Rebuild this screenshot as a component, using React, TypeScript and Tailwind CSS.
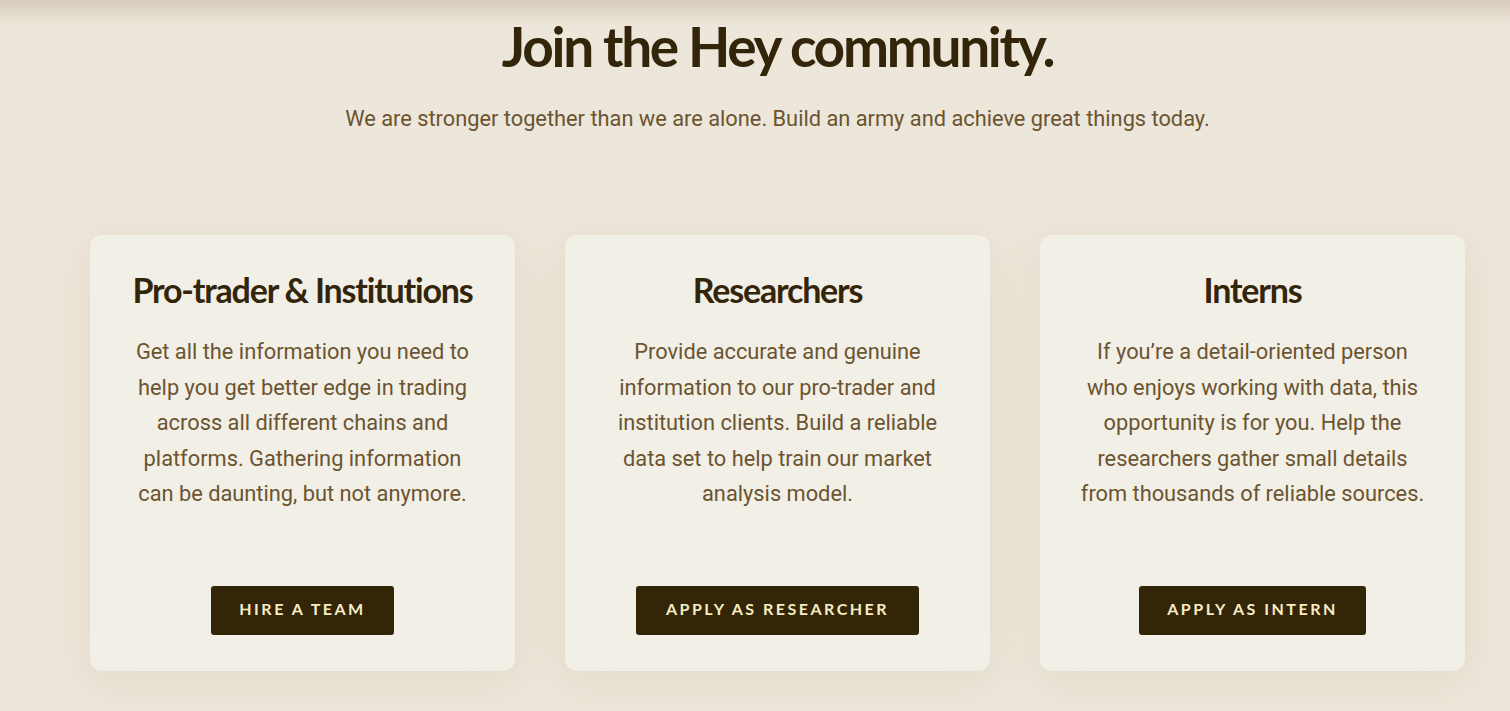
const roles = [
  {
    title: 'Pro-trader & Institutions',
    body: 'Get all the information you need to help you get better edge in trading across all different chains and platforms. Gathering information can be daunting, but not anymore.',
    cta: 'Hire a team',
    btnWidth: 'w-[183px]',
  },
  {
    title: 'Researchers',
    body: 'Provide accurate and genuine information to our pro-trader and institution clients. Build a reliable data set to help train our market analysis model.',
    cta: 'Apply as researcher',
    btnWidth: 'w-[283px]',
  },
  {
    title: 'Interns',
    body: 'If you\u2019re a detail-oriented person who enjoys working with data, this opportunity is for you. Help the researchers gather small details from thousands of reliable sources.',
    cta: 'Apply as intern',
    btnWidth: 'w-[227px]',
  },
];

function RoleCard({ title, body, cta, btnWidth }: (typeof roles)[number]) {
  return (
    <div className="flex h-[436px] w-[425px] flex-col items-center rounded-xl bg-[#f2efe6] px-[37px] pt-[31px] pb-[36px] text-center shadow-[0_10px_44px_rgba(160,140,100,0.14)]">
      <h3 className="font-['Lato',sans-serif] text-[34px] leading-[48px] font-bold tracking-[-1.2px] whitespace-nowrap text-[#33250a]">
        {title}
      </h3>
      <p className="mt-[20px] font-['Roboto',sans-serif] text-[21.8px] leading-[35.5px] font-normal text-[#6b5430]">
        {body}
      </p>
      <button
        type="button"
        className={`mt-auto h-[49px] ${btnWidth} rounded-[3px] bg-[#332508] pb-[3px] font-['Lato',sans-serif] text-[16px] font-bold tracking-[2.5px] text-[#f8ecc2] uppercase`}
      >
        {cta}
      </button>
    </div>
  );
}

export default function App() {
  return (
    <div className="relative min-h-[711px] overflow-hidden bg-[#ede6da]">
      <div className="pointer-events-none absolute inset-x-0 top-0 h-[26px] bg-gradient-to-b from-[#d6ccbb] to-transparent" />
      <div className="relative ml-[90px] flex w-[1375px] flex-col items-center pt-[14px]">
        <h1 className="font-['Lato',sans-serif] text-[55px] leading-[64px] font-bold tracking-[-2.3px] text-[#33250a]">
          Join the Hey community.
        </h1>
        <p className="mt-[25px] font-['Roboto',sans-serif] text-[21.8px] leading-[32px] font-normal text-[#6b5430]">
          We are stronger together than we are alone. Build an army and achieve great things today.
        </p>
        <div className="mt-[100px] flex w-full gap-[50px]">
          {roles.map((role) => (
            <RoleCard key={role.title} {...role} />
          ))}
        </div>
      </div>
    </div>
  );
}
